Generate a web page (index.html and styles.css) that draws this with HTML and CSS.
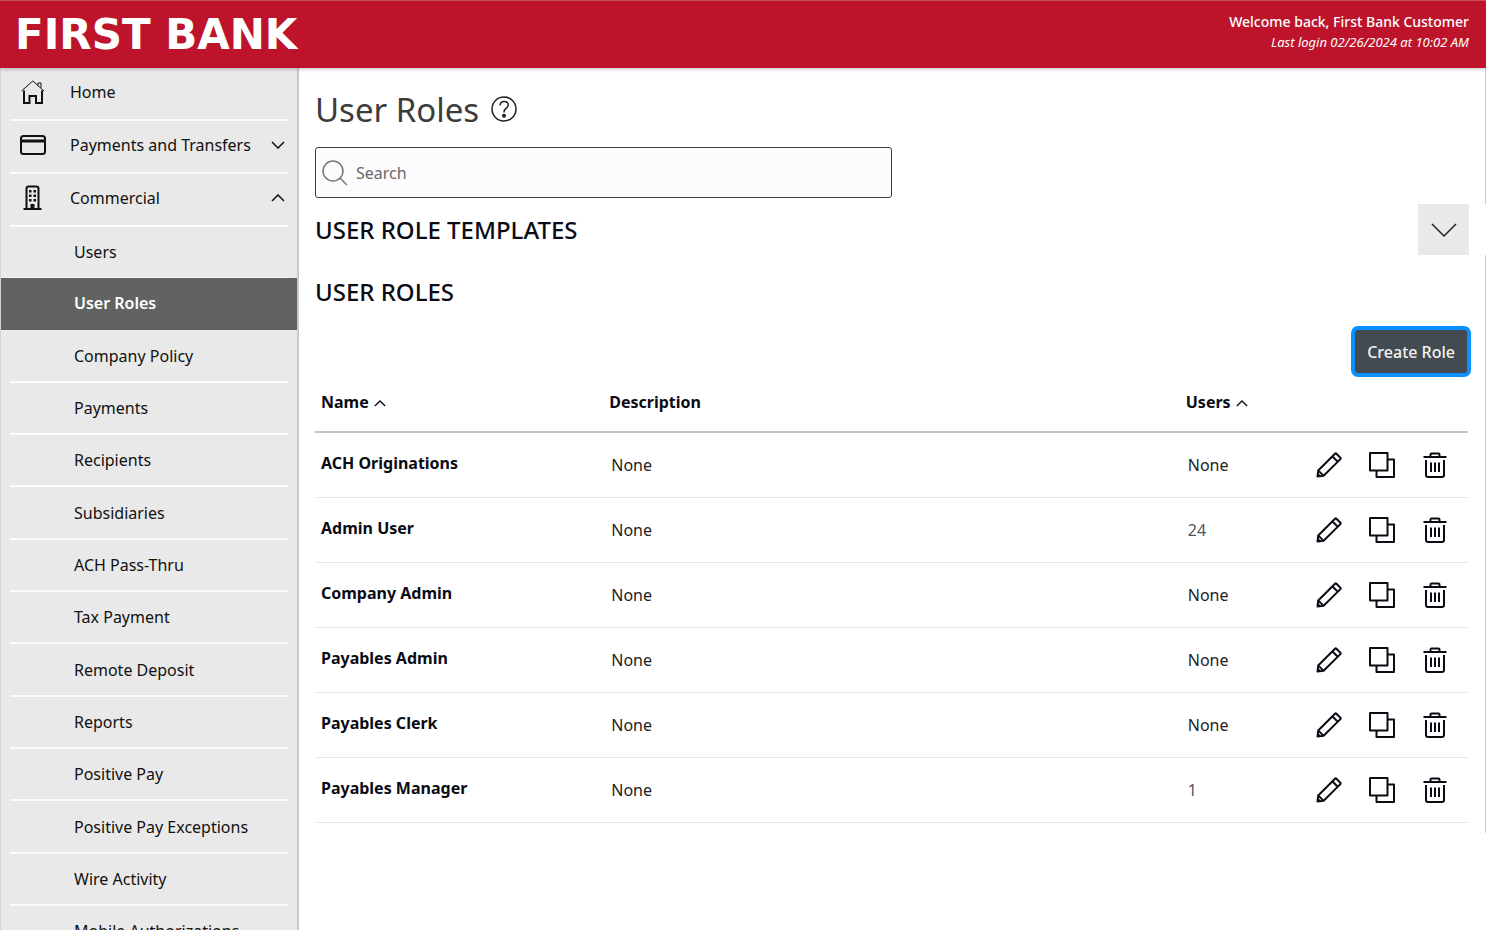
FILE: index.html
```html
<!DOCTYPE html>
<html lang="en">
<head>
<meta charset="utf-8">
<title>First Bank - User Roles</title>
<link rel="stylesheet" href="styles.css">
</head>
<body>
<svg class="sprite" aria-hidden="true">
  <symbol id="i-pencil" viewBox="0 0 26 26"><path d="M1.500 24.500 2.200 18.500 19 1.700q.7-.7 1.400 0l4 4q.7.7 0 1.400L7.600 23.800ZM16.500 4.500l5 5M2.400 18.600l5 5"/><path d="M1.200 24.800l.5-4.200 3.600 3.600z" fill="currentColor" stroke="none"/></symbol>
  <symbol id="i-copy" viewBox="0 0 26 26"><path d="M1 1h17.500v17.500H1zM18.500 7.500H25V25H7.500v-6.500"/></symbol>
  <symbol id="i-trash" viewBox="0 0 26 26"><path d="M1.500 5h23M8.500 5V2.500q0-1 1-1h7q1 0 1 1V5M4 8v15q0 2 2 2h14q2 0 2-2V8M9 10.500V20M13 10.500V20M17 10.500V20"/></symbol>
  <symbol id="i-up" viewBox="0 0 14 8"><path d="M1 7l6-6 6 6"/></symbol>
  <symbol id="i-down" viewBox="0 0 14 8"><path d="M1 1l6 6 6-6"/></symbol>
</svg>

<header class="topbar">
  <div class="brand">FIRST BANK</div>
  <div class="welcome">
    <p class="welcome-name">Welcome back, First Bank Customer</p>
    <p class="welcome-login">Last login 02/26/2024 at 10:02 AM</p>
  </div>
</header>

<div class="shell">
  <nav class="sidebar" aria-label="Main">
    <ul class="menu">
      <li><a class="item" href="#">
        <svg class="item-icon thin" viewBox="0 0 26 26"><path d="M1.500 12 12.800 2l11.200 10M18 6.500V4h3v5"/><path class="bold" d="M4 11.500V24h5.500v-7h6.500v7H22V11.500"/></svg>
        <span class="label">Home</span></a></li>
      <li><a class="item" href="#">
        <svg class="item-icon bold" viewBox="0 0 26 26"><rect x="1" y="4" width="24" height="18" rx="2.500"/><path d="M1 9h24" stroke-width="3"/></svg>
        <span class="label">Payments and Transfers</span>
        <svg class="chev" viewBox="0 0 14 8"><use href="#i-down"/></svg></a></li>
      <li><a class="item" href="#" aria-expanded="true">
        <svg class="item-icon bold" viewBox="0 0 26 26"><path d="M3.500 24h18M6.500 24V3.500q0-2 2-2h8q2 0 2 2V24"/><path fill="currentColor" stroke="none" d="M9 5h2.500v2.500H9zM13.500 5H16v2.500h-2.500zM9 9.500h2.500V12H9zM13.500 9.500H16V12h-2.500zM9 14h2.500v2.500H9zM13.500 14H16v2.500h-2.500zM10.500 19h4v5h-4z"/></svg>
        <span class="label">Commercial</span>
        <svg class="chev" viewBox="0 0 14 8"><use href="#i-up"/></svg></a>
        <ul class="submenu">
          <li><a class="subitem" href="#">Users</a></li>
          <li class="current"><a class="subitem" href="#" aria-current="page">User Roles</a></li>
          <li><a class="subitem" href="#">Company Policy</a></li>
          <li><a class="subitem" href="#">Payments</a></li>
          <li><a class="subitem" href="#">Recipients</a></li>
          <li><a class="subitem" href="#">Subsidiaries</a></li>
          <li><a class="subitem" href="#">ACH Pass-Thru</a></li>
          <li><a class="subitem" href="#">Tax Payment</a></li>
          <li><a class="subitem" href="#">Remote Deposit</a></li>
          <li><a class="subitem" href="#">Reports</a></li>
          <li><a class="subitem" href="#">Positive Pay</a></li>
          <li><a class="subitem" href="#">Positive Pay Exceptions</a></li>
          <li><a class="subitem" href="#">Wire Activity</a></li>
          <li><a class="subitem" href="#">Mobile Authorizations</a></li>
        </ul>
      </li>
    </ul>
  </nav>

  <main class="content">
    <section class="intro">
      <div class="title-row">
        <h1>User Roles</h1>
        <button class="help" type="button" aria-label="Help"><svg viewBox="0 0 26 26"><circle cx="13" cy="13" r="12"/><path d="M9 9.500q0-4 4.200-4 4 0 4 3.600 0 2-2.200 3.400-2 1.300-2 3.500v.5"/><circle cx="13" cy="19.800" r="1.300" fill="currentColor"/></svg></button>
      </div>
      <label class="search">
        <svg viewBox="0 0 26 26"><circle cx="11" cy="11" r="10"/><path d="M18 18l7 7"/></svg>
        <input type="search" placeholder="Search" aria-label="Search">
      </label>
    </section>

    <section class="templates">
      <h2>USER ROLE TEMPLATES</h2>
      <button class="expand" type="button" aria-label="Expand user role templates"><svg viewBox="0 0 26 14"><path d="M1 1l12 12L25 1"/></svg></button>
    </section>

    <section class="roles">
      <h2>USER ROLES</h2>
      <button class="create" type="button">Create Role</button>
      <table>
        <colgroup><col class="c-name"><col class="c-desc"><col class="c-users"><col></colgroup>
        <thead>
          <tr>
            <th scope="col">Name <svg class="sort" viewBox="0 0 14 8"><use href="#i-up"/></svg></th>
            <th scope="col">Description</th>
            <th scope="col">Users <svg class="sort" viewBox="0 0 14 8"><use href="#i-up"/></svg></th>
            <td></td>
          </tr>
        </thead>
        <tbody id="rows"></tbody>
      </table>
    </section>
  </main>
</div>
<script src="roles.js"></script>
</body>
</html>
```

FILE: styles.css
```css
* { box-sizing: border-box; }

body {
  margin: 0;
  height: 100vh;
  display: flex;
  flex-direction: column;
  overflow: hidden;
  background: #fff;
  color: #0b0b14;
  font: 16px/24px "Noto Sans", "Open Sans", sans-serif;
}

h1, h2, p, ul { margin: 0; padding: 0; font-weight: inherit; }
ul { list-style: none; }
a { color: inherit; text-decoration: none; }
button { border: 0; padding: 0; background: none; color: inherit; font: inherit; cursor: pointer; }
svg { display: block; fill: none; stroke: currentColor; stroke-width: 1.5; }
.sprite { display: none; }

.topbar {
  position: relative;
  flex: none;
  display: flex;
  justify-content: space-between;
  align-items: center;
  height: 68px;
  padding: 0 17px 0 15px;
  background: #bd142b;
  border-top: 1px solid #c9505f;
  color: #fff;
  box-shadow: 0 1px 4px rgba(0, 0, 0, 0.25);
}
.brand { font: bold 42px/48px "DejaVu Sans", sans-serif; }
.welcome { padding-bottom: 6px; font-size: 13px; line-height: 20px; text-align: right; }
.welcome-name { font-size: 14px; font-weight: 500; }
.welcome-login { font-style: italic; }

.shell { flex: 1; min-height: 0; display: flex; }

.sidebar {
  flex: none;
  width: 299px;
  overflow: hidden;
  background: #e9e9e9;
  border-left: 1px solid #d4d4d4;
  border-right: 2px solid #c8c8c8;
  color: #111;
}
.item, .subitem {
  display: flex;
  align-items: center;
  height: 52px;
  margin: 0 9px;
  border-bottom: 2px solid #fbfbfb;
}
.item { height: 53px; padding: 0 3px 4px 10px; }
.item-icon { flex: none; width: 26px; height: 26px; }
.label { flex: 1; padding-left: 24px; }
.thin { stroke-width: 1; }
.bold { stroke-width: 2; }
.chev { width: 14px; height: 8px; }
.subitem { padding-left: 64px; }
.submenu li:nth-child(3n) .subitem { height: 53px; }
.submenu .current { margin-top: -1px; background: #616362; color: #fff; font-weight: 600; }
.current .subitem { border-color: transparent; }

.content { flex: 1; min-width: 0; }
.intro, .templates, .roles { padding: 0 17px 0 16px; }
.intro, .roles { border-right: 1px solid #ccc; }
.templates { padding-right: 17px; }

.intro { padding-top: 18px; padding-bottom: 6px; }
.title-row { display: flex; align-items: center; gap: 12px; height: 48px; margin-bottom: 13px; }
h1 { color: #3c3c3c; font-size: 34px; line-height: 48px; }
h1 { font-size: 33px; }
.help { width: 26px; height: 26px; margin-bottom: 2px; color: #222; }
.search {
  display: flex;
  align-items: center;
  gap: 8px;
  width: 50%;
  height: 51px;
  padding: 0 6px;
  background: #fcfcff;
  border: 1px solid #3c3c3c;
  border-radius: 3px;
}
.search svg { flex: none; width: 26px; height: 26px; color: #777; }
.search input { flex: 1; min-width: 0; border: 0; padding: 0; background: none; outline: 0; font: inherit; }
.search input::placeholder { color: #686868; opacity: 1; }

h2 { font-size: 24px; line-height: 32px; font-weight: 500; }
.templates { display: flex; justify-content: space-between; align-items: center; }
.expand { width: 51px; height: 51px; background: #e9e9e9; color: #222; }
.expand svg { width: 26px; height: 14px; margin: 0 auto; }

.roles { display: flex; flex-direction: column; padding-top: 21px; padding-bottom: 10px; }
.create {
  align-self: flex-end;
  height: 43px;
  margin: 22px 1px 0 0;
  padding: 0 12px;
  border-radius: 3px;
  background: #434a50;
  color: #f2f2f2;
  font-weight: 500;
  box-shadow: 0 0 0 4px #0a91ff;
}

table { width: 100%; table-layout: fixed; border-collapse: collapse; }
.c-name { width: 25%; }
.c-desc { width: 50%; }
.c-users { width: 11%; }
th, td { padding: 0 6px; text-align: left; }
thead tr { height: 59px; border-bottom: 2px solid #c4c4c4; }
thead .sort { display: inline-block; width: 12px; height: 7px; margin-left: 1px; vertical-align: 1px; }
tbody tr { height: 65px; border-bottom: 1px solid #e9e9e9; }
tbody th { padding-bottom: 3px; }
tbody td { padding-left: 8px; color: #222; }
tbody .muted { color: #555; }
.actions { display: flex; justify-content: flex-end; gap: 27px; padding-right: 14px; color: #0b0b14; }
.actions button, .actions svg { width: 26px; height: 26px; }
.actions svg { stroke-width: 2; stroke-linejoin: round; }
```

FILE: roles.js
```js
const roles = [
  ["ACH Originations", "None", "None"],
  ["Admin User", "None", "24"],
  ["Company Admin", "None", "None"],
  ["Payables Admin", "None", "None"],
  ["Payables Clerk", "None", "None"],
  ["Payables Manager", "None", "1"]
];
const action = (label, icon, role) =>
  `<button type="button" aria-label="${label} ${role}"><svg viewBox="0 0 26 26"><use href="#i-${icon}"/></svg></button>`;
document.getElementById("rows").innerHTML = roles.map(([name, desc, users]) => `
  <tr>
    <th scope="row">${name}</th>
    <td>${desc}</td>
    <td${users === "None" ? "" : ' class="muted"'}>${users}</td>
    <td><div class="actions">${action("Edit", "pencil", name)}${action("Copy", "copy", name)}${action("Delete", "trash", name)}</div></td>
  </tr>`).join("");
```
